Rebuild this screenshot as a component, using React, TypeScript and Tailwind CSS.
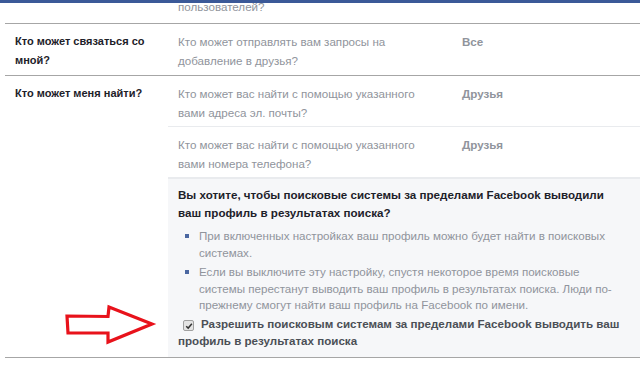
import React from 'react';

const gray = 'text-[#90949c]';

const SubRow = ({ question, value, last }: { question: string; value: string; last?: boolean }) => (
  <div className={`flex h-[51px] pt-[8px] ${last ? '' : 'border-b border-[#e9ebee]'}`}>
    <div className={`w-[294px] pl-[10px] pr-[30px] leading-[19px] ${gray}`}>{question}</div>
    <div className="font-bold leading-[19px] text-[#90949c]">{value}</div>
  </div>
);

const Bullet = ({ children }: { children: React.ReactNode }) => (
  <li className="flex">
    <span className="mt-[6px] ml-[7px] mr-[10px] h-[4px] w-[4px] shrink-0 bg-[#4b67a1]" />
    <span>{children}</span>
  </li>
);

export default function App() {
  return (
    <div
      className="relative h-[388px] w-[640px] overflow-hidden bg-white text-[11.6px]"
      style={{ fontFamily: '"Liberation Sans", Arial, sans-serif' }}
    >
      {/* top bar */}
      <div className="h-[3px] bg-[#3b5998]" />

      <div className="ml-[5px]">
        {/* previous row, scrolled off */}
        <div className="h-[21px] overflow-hidden border-b border-[#a6a6a6]">
          <div className={`-mt-[6px] pl-[173px] leading-[19px] ${gray}`}>пользователей?</div>
        </div>

        {/* contact row */}
        <div className="flex border-b border-[#a6a6a6]">
          <div className="w-[163px] pl-[10px] pr-[6px] pt-[8px] text-[11px] font-bold leading-[19px] text-[#1d2129]">
            Кто может связаться со мной?
          </div>
          <div className="flex-1">
            <SubRow question="Кто может отправлять вам запросы на добавление в друзья?" value="Все" last />
          </div>
        </div>

        {/* find row */}
        <div className="flex border-b border-[#a6a6a6]">
          <div className="w-[163px] pl-[10px] pr-[6px] pt-[8px] text-[11px] font-bold leading-[19px] text-[#1d2129]">
            Кто может меня найти?
          </div>
          <div className="flex-1">
            <SubRow question="Кто может вас найти с помощью указанного вами адреса эл. почты?" value="Друзья" />
            <SubRow question="Кто может вас найти с помощью указанного вами номера телефона?" value="Друзья" />
            <div className="border-t border-[#e9ebee] bg-[#f6f7f9] pl-[10px] pr-[14px] pt-[7px] pb-[8px]">
              <div className="font-bold leading-[18px] text-[#1d2129]">
                Вы хотите, чтобы поисковые системы за пределами Facebook выводили ваш профиль в результатах поиска?
              </div>
              <ul className={`mt-[6px] space-y-[3px] leading-[16.5px] ${gray}`}>
                <Bullet>При включенных настройках ваш профиль можно будет найти в поисковых системах.</Bullet>
                <Bullet>
                  Если вы выключите эту настройку, спустя некоторое время поисковые системы перестанут выводить ваш
                  профиль в результатах поиска. Люди по-прежнему смогут найти ваш профиль на Facebook по имени.
                </Bullet>
              </ul>
              <div className="mt-[1px] font-bold leading-[17px] text-[#4b4f56]">
                <span className="relative top-[1px] ml-[5px] mr-[7px] inline-flex h-[11px] w-[11px] items-center justify-center rounded-[2px] border border-[#a0a0a0] bg-[#e4e4e4] align-[-1px]">
                  <svg viewBox="0 0 10 10" className="h-[8px] w-[8px]">
                    <path d="M1.5 5.2 L4 7.6 L8.6 2.2" fill="none" stroke="#333" strokeWidth="1.8" />
                  </svg>
                </span>
                Разрешить поисковым системам за пределами Facebook выводить ваш профиль в результатах поиска
              </div>
            </div>
          </div>
        </div>
      </div>

      {/* red arrow annotation */}
      <svg className="absolute left-0 top-0" width="640" height="388" viewBox="0 0 640 388">
        <path
          d="M67 316 L108 316.5 L109 307 L152 324 L108 342 L108 333 L68 333 Z"
          fill="white"
          stroke="#e8121b"
          strokeWidth="3.2"
          strokeLinejoin="miter"
        />
      </svg>
    </div>
  );
}
